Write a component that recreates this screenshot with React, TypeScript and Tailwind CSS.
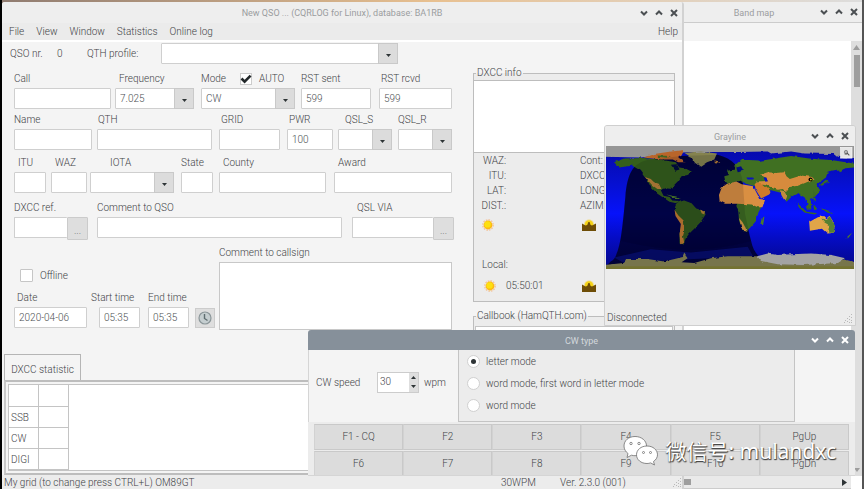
import React from "react";

type Kids = { children?: React.ReactNode };

const inputBase =
  "h-[21px] min-w-0 rounded-[1px] border border-[#cfcfcf] bg-white px-1 text-[#4c5053] outline-none";

function Controls({ light = false, snug = false }: { light?: boolean; snug?: boolean }) {
  const tone = light ? "text-white" : "text-[#4b4f52]";
  const edge = snug ? "pr-[3px]" : "pr-[5px]";
  return (
    <div className={`flex justify-end gap-[5px] ${edge} ${tone}`}>
      <button type="button" aria-label="Minimize" className="size-[10px]">
        <svg viewBox="0 0 10 10" fill="none" stroke="currentColor" strokeWidth="2">
          <path d="M2 3.5 5 6.5 8 3.5" />
        </svg>
      </button>
      <button type="button" aria-label="Maximize" className="size-[10px]">
        <svg viewBox="0 0 10 10" fill="none" stroke="currentColor" strokeWidth="2">
          <path d="M2 6.5 5 3.5 8 6.5" />
        </svg>
      </button>
      <button type="button" aria-label="Close" className="size-[10px]">
        <svg viewBox="0 0 10 10" fill="none" stroke="currentColor" strokeWidth="2">
          <path d="M2 2 8 8M8 2 2 8" />
        </svg>
      </button>
    </div>
  );
}

function TitleBar({
  title,
  active = false,
  snug = false,
  tall = false,
}: {
  title: string;
  active?: boolean;
  snug?: boolean;
  tall?: boolean;
}) {
  return (
    <header
      className={`grid shrink-0 grid-cols-[1fr_auto_1fr] items-center ${tall ? "h-[21px]" : "h-5"} ${
        active ? "bg-[#86909a] text-[#d3d8dc]" : "bg-[#eeeeee] text-[#9b9d9f]"
      }`}
    >
      <span />
      <h2 className="pt-px text-[9px] font-normal">{title}</h2>
      <Controls light={active} snug={snug} />
    </header>
  );
}

function Field({
  id,
  label,
  className,
  indent = "",
  extra,
  children,
}: Kids & { id: string; label: string; className: string; indent?: string; extra?: React.ReactNode }) {
  return (
    <div className={`flex shrink-0 flex-col gap-[3px] ${className}`}>
      <div className={`flex h-3 items-center whitespace-nowrap ${indent}`}>
        <label htmlFor={id}>{label}</label>
        {extra}
      </div>
      {children}
    </div>
  );
}

function Text({ id, value = "" }: { id: string; value?: string }) {
  return <input id={id} type="text" defaultValue={value} className={`${inputBase} w-full`} />;
}

function Combo({ id, value = "" }: { id: string; value?: string }) {
  return (
    <div className="relative w-full">
      <select id={id} defaultValue={value} className={`${inputBase} block w-full appearance-none pr-5`}>
        <option value={value}>{value}</option>
      </select>
      <span className="pointer-events-none absolute inset-y-0 right-0 flex w-5 items-center justify-center border border-[#c9c9c9] bg-[#dcdcdc] pt-[3px]">
        <svg className="h-[3px] w-[5px]" viewBox="0 0 5 3" fill="#2e3436">
          <path d="M0 0h5L2.5 3z" />
        </svg>
      </span>
    </div>
  );
}

function Lookup({ id, label }: { id: string; label: string }) {
  return (
    <div className="flex items-start">
      <input id={id} type="text" className={`${inputBase} flex-1 border-r-0`} />
      <button
        type="button"
        aria-label={label}
        className="h-[23px] w-[21px] rounded-[1px] border border-[#cbcbcb] bg-[#dedede] pt-1 text-[#7a7a7a]"
      >
        ...
      </button>
    </div>
  );
}

function Sun() {
  return (
    <svg className="size-3" viewBox="0 0 12 12">
      <circle cx="6" cy="6" r="5.2" fill="none" stroke="#f3c49c" strokeWidth="1.4" strokeDasharray="1.6 1.1" />
      <circle cx="6" cy="6" r="4.4" fill="#fdb813" />
      <circle cx="5.6" cy="5.4" r="3.2" fill="#fde010" />
    </svg>
  );
}

function Sunset() {
  return (
    <svg className="h-3 w-3.5" viewBox="0 0 14 12">
      <circle cx="7" cy="5.5" r="5.2" fill="#f0e0a0" />
      <circle cx="7" cy="5.5" r="4.2" fill="#f5d316" />
      <path d="M0 4.500 3.500 6.500 5.200 6 6.400 3H7.600L8.600 6 10 6.500 14 4.500V12H0z" fill="#6e4d06" />
    </svg>
  );
}

function Grip() {
  return (
    <svg className="size-[9px] shrink-0" viewBox="0 0 9 9" fill="#b9b9b9">
      <path d="M7 0h1v1H7zM5 2h1v1H5zM7 3h1v1H7zM3 4h1v1H3zM5 5h1v1H5zM7 6h1v1H7zM1 6h1v1H1zM3 7h1v1H3zM0 8h1v1H0zM5 8h1v1H5zM7 8h1v1H7z" />
    </svg>
  );
}

function WorldMap() {
  return (
    <svg viewBox="6 18 742 366" preserveAspectRatio="none" className="h-[123px] w-full" role="img" aria-label="World map">
      <defs>
        <linearGradient id="sea" x1="0" y1="0" x2="0" y2="1">
          <stop offset="0" stopColor="#0508a8" />
          <stop offset=".3" stopColor="#0610d0" />
          <stop offset=".55" stopColor="#0612fa" />
          <stop offset=".75" stopColor="#050cc4" />
          <stop offset="1" stopColor="#040786" />
        </linearGradient>
        <filter id="rough" x="-5%" y="-5%" width="110%" height="110%">
          <feTurbulence type="fractalNoise" baseFrequency=".06" numOctaves="2" seed="4" result="n" />
          <feDisplacementMap in="SourceGraphic" in2="n" scale="9" xChannelSelector="R" yChannelSelector="G" />
        </filter>
      </defs>
      <rect x="6" y="18" width="742" height="366" fill="url(#sea)" />
      {/* Night side of the terminator */}
      <path d="M20 362C50 350 56 250 64 170 70 100 86 70 130 60L230 48 340 44C385 56 410 80 416 130 420 200 428 260 440 300 448 340 470 362 520 374L6 376z" fill="#000018" fillOpacity=".76" />
      <path d="M30 350 140 325 260 335 430 318 446 346 240 356 60 366z" fill="#0a1488" fillOpacity=".5" />
      <g filter="url(#rough)">
        <path d="M0 0H770V56L700 50 690 42 600 40 560 34 500 40 490 34 400 36 340 36 250 36 180 44 110 52 0 50z" fill="#969696" />
        {/* North America */}
        <path d="M30 66 60 55 120 54 175 60 215 66 225 82 240 84 262 96 250 104 232 108 222 122 210 134 204 146 184 144 170 150 178 166 196 170 204 180 222 182 216 188 196 184 160 160 140 140 126 114 110 92 84 76 46 82z" fill="#355f1d" />
        <path d="M200 74 218 72 226 88 214 92z" fill="#04083c" />
        <path d="M118 52 150 42 190 36 240 30 232 46 222 52 244 66 222 66 206 58 170 58z" fill="#b9652a" />
        <path d="M160 46 200 48 190 53 162 51z" fill="#3f6420" />
        <path d="M122 110 140 116 150 126 164 130 172 146 160 146 146 136z" fill="#b98238" />
        <path d="M240 38 290 34 338 40 330 58 308 66 288 80 272 68 262 52z" fill="#85834f" />
        <path d="M330 64 348 66 342 70 332 69z" fill="#b67b35" />
        <path d="M186 162 216 168 230 174 212 173z" fill="#4d7a2a" />
        {/* South America */}
        <path d="M218 186 240 180 262 188 276 204 302 212 304 222 288 246 270 264 254 280 244 294 238 312 226 308 226 280 232 250 214 222 212 202z" fill="#32591c" />
        <path d="M211 208 222 224 238 240 242 262 236 284 240 306 228 310 226 280 230 250 214 226z" fill="#c07a30" />
        <path d="M288 208 302 212 300 222 292 218z" fill="#b08035" />
        {/* Eurasia */}
        <path d="M362 124 360 108 374 104 368 92 392 88 390 76 410 60 436 60 470 62 520 54 560 48 620 56 680 60 748 70 748 82 722 84 704 96 700 88 670 94 664 112 648 124 636 132 646 150 632 168 616 176 624 192 614 196 604 182 598 170 580 158 562 168 546 184 536 170 526 156 500 150 480 150 462 138 446 136 430 132 412 120 388 126 380 134z" fill="#3f6f22" />
        <path d="M396 82 410 78 418 92 400 96z" fill="#060c80" />
        <path d="M466 104 490 96 516 98 540 96 546 108 556 116 590 106 622 110 630 118 612 124 596 130 580 136 556 140 548 152 536 146 520 148 500 142 482 134 456 132 452 124 490 122 484 112z" fill="#d68b3e" />
        <path d="M526 150 540 152 546 166 540 180 532 166z" fill="#c08c40" />
        <path d="M478 112 486 112 490 124 482 124zM426 112 450 112 446 118 430 118z" fill="#0710c8" />
        {/* Arabia */}
        <path d="M450 128 470 128 498 152 494 162 470 174 454 148z" fill="#cf7a2c" />
        {/* Africa */}
        <path d="M400 186 454 188 480 184 462 216 456 240 440 258 428 270 414 268 404 240 402 214 396 196z" fill="#3e6b22" />
        <path d="M344 164 352 142 368 130 396 124 412 132 446 138 458 160 466 176 482 178 474 200 460 200 442 192 400 190 362 190 346 182z" fill="#d98f42" />
        <path d="M404 232 414 244 424 262 426 270 412 266z" fill="#d99a45" />
        <path d="M472 232 480 228 476 250 468 250z" fill="#4d7a2a" />
        {/* South-east Asia and Oceania */}
        <path d="M576 186 592 200 606 214 638 218 630 222 600 216 584 202z" fill="#3b6b22" />
        <path d="M604 198 620 190 620 206 608 208zM626 150 632 168 634 184 628 178zM626 196 638 200 630 212zM648 202 672 210 686 220 668 216zM664 118 672 126 652 136 646 134z" fill="#3b6b22" />
        <path d="M614 244 640 230 656 226 666 236 676 228 692 252 686 276 668 278 652 264 616 270z" fill="#e0a548" />
        <path d="M650 234 666 238 676 230 692 252 686 276 670 276 674 254 660 246z" fill="#578033" />
        <path d="M742 276 734 288 722 294 732 284z" fill="#4d7a2a" />
        {/* Antarctica */}
        <path d="M0 372 60 366 66 354 130 354 180 362 236 348 240 338 250 352 232 364 270 366 320 352 370 346 460 346 530 350 720 356 760 366V400H0z" fill="#77754b" />
        <path d="M458 346 490 338 520 342 560 340 620 338 680 342 722 352 700 366 600 372 520 370 470 360z" fill="#a3a3a3" />
      </g>
      <path d="M64 170C70 100 86 70 130 60L230 48 340 44C385 56 410 80 416 130L422 220 440 300C300 340 180 330 50 300z" fill="#000010" fillOpacity=".12" />
      <rect x="6" y="376" width="742" height="8" fill="#747330" />
      <circle cx="618" cy="118" r="6" fill="#000" />
      <circle cx="619" cy="118" r="2.5" fill="#ece81a" />
      <rect x="708" y="22" width="34" height="32" fill="#e6e6e6" stroke="#fafafa" strokeWidth="2" />
      <circle cx="724" cy="36" r="5" fill="#b5b5b5" stroke="#707070" strokeWidth="2" />
      <path d="M727 38 734 46M720 42H728" stroke="#555" strokeWidth="3" />
    </svg>
  );
}

function QsoForm() {
  return (
    <form className="w-[471px] shrink-0 pl-3 pt-px">
      <div className="-ml-1 flex h-[21px] items-center">
        <span className="w-[47px]">QSO nr.</span>
        <span className="w-[30px]">0</span>
        <label htmlFor="profile" className="w-[74px]">QTH profile:</label>
        <div className="w-[237px]">
          <Combo id="profile" />
        </div>
      </div>

      <div className="mt-[9px] flex">
        <Field id="call" label="Call" className="w-[97px]"><Text id="call" /></Field>
        <Field id="freq" label="Frequency" className="ml-1 w-[79px]" indent="pl-1"><Combo id="freq" value="7.025" /></Field>
        <Field
          id="mode"
          label="Mode"
          className="ml-[7px] w-[94px]"
          extra={
            <label className="ml-[14px] flex items-center gap-[7px]">
              <span className="relative flex size-3 shrink-0">
                <input type="checkbox" defaultChecked className="peer size-3 appearance-none border border-[#cccccc] bg-white" />
                <svg className="pointer-events-none absolute inset-0 hidden peer-checked:block" viewBox="0 0 12 12" fill="none" stroke="#22282a" strokeWidth="2.6">
                  <path d="M1.5 5.5 4.6 8.6 10.6 2.6" />
                </svg>
              </span>
              AUTO
            </label>
          }
        >
          <Combo id="mode" value="CW" />
        </Field>
        <Field id="sent" label="RST sent" className="ml-[6px] w-[70px]"><Text id="sent" value="599" /></Field>
        <Field id="rcvd" label="RST rcvd" className="ml-2 w-[73px]" indent="pl-[2px]"><Text id="rcvd" value="599" /></Field>
      </div>

      <div className="mt-[5px] flex">
        <Field id="name" label="Name" className="w-[78px]"><Text id="name" /></Field>
        <Field id="qth" label="QTH" className="ml-[5px] w-[115px]" indent="pl-px"><Text id="qth" /></Field>
        <Field id="grid" label="GRID" className="ml-[7px] w-[61px]" indent="pl-[2px]"><Text id="grid" /></Field>
        <Field id="pwr" label="PWR" className="ml-[7px] w-[46px]" indent="pl-[2px]"><Text id="pwr" value="100" /></Field>
        <Field id="qsls" label="QSL_S" className="ml-[5px] w-[54px]" indent="pl-[7px]"><Combo id="qsls" /></Field>
        <Field id="qslr" label="QSL_R" className="ml-[6px] w-[54px]"><Combo id="qslr" /></Field>
      </div>

      <div className="mt-[7px] flex">
        <Field id="itu" label="ITU" className="w-8" indent="pl-1"><Text id="itu" /></Field>
        <Field id="waz" label="WAZ" className="ml-[5px] w-9" indent="pl-1"><Text id="waz" /></Field>
        <Field id="iota" label="IOTA" className="ml-[3px] w-[84px]" indent="pl-5"><Combo id="iota" /></Field>
        <Field id="state" label="State" className="ml-[7px] w-8"><Text id="state" /></Field>
        <Field id="county" label="County" className="ml-[6px] w-[107px]" indent="pl-1"><Text id="county" /></Field>
        <Field id="award" label="Award" className="ml-2 w-[118px]" indent="pl-1"><Text id="award" /></Field>
      </div>

      <div className="mt-[9px] flex">
        <Field id="ref" label="DXCC ref." className="w-[74px]"><Lookup id="ref" label="Choose DXCC reference" /></Field>
        <Field id="comment" label="Comment to QSO" className="ml-[9px] w-[245px]"><Text id="comment" /></Field>
        <Field id="via" label="QSL VIA" className="ml-[10px] w-[102px]" indent="pl-[5px]"><Lookup id="via" label="Choose QSL manager" /></Field>
      </div>

      <div className="mt-[7px] flex">
        <div className="w-[205px] pt-[22px]">
          <label className="flex items-center gap-[7px] pl-[6px]">
            <input type="checkbox" className="size-[13px] appearance-none rounded-[1px] border border-[#c6c6c6] bg-white" />
            Offline
          </label>
          <div className="mt-[10px] flex items-end">
            <Field id="date" label="Date" className="w-[73px]" indent="pl-[3px]"><Text id="date" value="2020-04-06" /></Field>
            <Field id="start" label="Start time" className="ml-1 w-[49px]"><div className="flex pl-2"><Text id="start" value="05:35" /></div></Field>
            <Field id="end" label="End time" className="ml-2 w-[41px]"><Text id="end" value="05:35" /></Field>
            <button type="button" aria-label="Set current time" className="ml-[6px] flex size-5 items-center justify-center border border-[#cccccc] bg-[#dedede]">
              <svg className="size-[14px]" viewBox="0 0 14 14" fill="none">
                <circle cx="7" cy="7" r="6" fill="#c5ced0" stroke="#8b9699" strokeWidth="1.2" />
                <path d="M6.5 3V7.5L9.5 9.5" stroke="#5f6d70" strokeWidth="1.4" />
              </svg>
            </button>
          </div>
        </div>
        <div className="flex w-[233px] flex-col gap-[3px]">
          <label htmlFor="callnote">Comment to callsign</label>
          <textarea id="callnote" className="h-[68px] resize-none border border-[#c8c8c8] bg-white p-1 outline-none" />
        </div>
      </div>
    </form>
  );
}

function InfoPanel() {
  return (
    <div className="mr-[7px] min-w-0 flex-1 pt-[25px]">
      <fieldset className="min-w-0 border border-[#bdbdbd] bg-[#ececec]">
        <legend className="ml-[2px] px-px">DXCC info</legend>
        <textarea aria-label="DXCC details" className="mt-px block h-[73px] w-full resize-none border-y border-[#bdbdbd] bg-white outline-none" />
        <dl className="grid grid-cols-[30px_74px_1fr] pl-[2px] leading-[15px]">
          <dt className="text-right">WAZ:</dt><dd /><dt>Cont:</dt>
          <dt className="text-right">ITU:</dt><dd /><dt>DXCC:</dt>
          <dt className="text-right">LAT:</dt><dd /><dt>LONG:</dt>
          <dt className="text-right">DIST.:</dt><dd /><dt>AZIM:</dt>
        </dl>
        <div className="mt-[6px] flex pl-2">
          <div className="w-[100px]"><Sun /></div>
          <Sunset />
        </div>
        <p className="mt-7 pl-2">Local:</p>
        <div className="mb-[9px] mt-[9px] flex items-center pl-[10px]">
          <Sun />
          <time className="w-[86px] pl-[10px]">05:50:01</time>
          <Sunset />
        </div>
      </fieldset>
      <fieldset className="mt-2 min-w-0 border border-[#bdbdbd] bg-[#ececec] px-px">
        <legend className="ml-px px-px">Callbook (HamQTH.com)</legend>
        <textarea aria-label="Callbook entry" className="mt-1 block h-4 w-full resize-none border border-[#c4c4c4] bg-white outline-none" />
      </fieldset>
    </div>
  );
}

function MainWindow() {
  return (
    <section className="absolute bottom-0 left-[2px] right-[180px] top-[2px] flex flex-col overflow-hidden rounded-t-[3px] border-r-2 border-[#d2d2d2] bg-[#f4f4f4]">
      <TitleBar title="New QSO ... (CQRLOG for Linux), database: BA1RB" snug tall />
      <nav className="flex h-[19px] shrink-0 items-center gap-3 border-b-2 border-white bg-[#ebebeb] pl-[7px] pr-1">
        <button type="button">File</button>
        <button type="button">View</button>
        <button type="button">Window</button>
        <button type="button">Statistics</button>
        <button type="button">Online log</button>
        <button type="button" className="ml-auto">Help</button>
      </nav>
      <div className="flex h-[312px] shrink-0 overflow-hidden">
        <QsoForm />
        <InfoPanel />
      </div>
      <div className="flex min-h-0 flex-1 flex-col pl-[2px]">
        <button type="button" className="-mb-px h-[27px] w-[77px] self-start border border-b-0 border-[#b5b5b5] bg-[#f4f4f4] pt-1">
          DXCC statistic
        </button>
        <div className="flex min-h-0 flex-1 flex-col border-2 border-r-0 border-[#bdbdbd] border-l-[#c8c8c8] p-[2px]">
          <div className="min-h-0 flex-1 border border-[#c4c4c4] bg-white">
            <table className="w-[60px] table-fixed border-collapse">
              <tbody>
                {["", "SSB", "CW", "DIGI"].map((band) => (
                  <tr key={band} className="h-[21px]">
                    <th scope="row" className="border-b border-r border-[#c4c4c4] px-[2px] pt-[3px] text-left font-light">{band}</th>
                    <td className="border-b border-r border-[#c4c4c4]" />
                  </tr>
                ))}
              </tbody>
            </table>
          </div>
        </div>
      </div>
      <footer className="flex h-[14px] shrink-0 items-center bg-[#ececec] pl-[2px] pt-px">
        <span className="min-w-0 flex-1">My grid (to change press CTRL+L) OM89GT</span>
        <span className="w-[59px]">30WPM</span>
        <span className="w-[113px]">Ver. 2.3.0 (001)</span>
        <Grip />
      </footer>
    </section>
  );
}

function BandMapWindow() {
  return (
    <section className="absolute bottom-0 left-[646px] right-[2px] top-[2px] flex flex-col bg-white">
      <TitleBar title="Band map" snug />
      <div className="h-[19px] shrink-0 border-t border-[#cccccc] bg-[#f4f4f4]" />
      <div className="flex min-h-0 flex-1">
        <div className="flex-1" />
        <div className="flex w-[11px] flex-col items-center bg-[#dedede] py-1">
          <svg className="h-[5px] w-[7px]" viewBox="0 0 7 5" fill="#9d9d9d"><path d="M3.5 0 7 5H0z" /></svg>
          <div className="mt-[5px] h-8 w-[6px] bg-[#9e9e9e]" />
          <svg className="mt-auto h-[4px] w-[6px]" viewBox="0 0 6 4" fill="#9d9d9d"><path d="M0 0h6L3 4z" /></svg>
        </div>
      </div>
      <div className="mr-[11px] flex h-[13px] shrink-0 items-center justify-between border-b border-[#cccccc] bg-[#e9e9e9] pr-1">
        <div className="h-[6px] w-[45px] bg-[#9e9e9e]" />
        <svg className="h-[7px] w-[5px]" viewBox="0 0 5 7" fill="#2e3436"><path d="M0 0 5 3.5 0 7z" /></svg>
      </div>
    </section>
  );
}

function GraylineWindow() {
  return (
    <section className="absolute left-[604px] right-[8px] top-[125px] flex h-[201px] flex-col overflow-hidden rounded-t-[3px] border border-[#cfcfcf] bg-[#ececec]">
      <TitleBar title="Grayline" />
      <div className="px-px"><WorldMap /></div>
      <footer className="mt-auto flex items-center justify-between pb-px pl-[2px] pr-[2px]">
        <span>Disconnected</span>
        <Grip />
      </footer>
    </section>
  );
}

const keys = ["F1 - CQ", "F2", "F3", "F4", "F5", "PgUp", "F6", "F7", "F8", "F9", "F10", "PgDn"];
const modes = ["letter mode", "word mode, first word in letter mode", "word mode"];

function CwWindow() {
  return (
    <section className="absolute left-[308px] right-[9px] top-[330px] flex h-[146px] flex-col overflow-hidden rounded-t-[3px] border-b border-[#d5d5d5] bg-[#f4f4f4]">
      <TitleBar title="CW type" active />
      <div className="flex h-[72px] shrink-0">
        <div className="flex w-[150px] items-center border-l border-[#d5d5d5] pb-2 pl-[7px]">
          <label htmlFor="speed" className="w-[61px] pt-[2px]">CW speed</label>
          <div className="flex h-[21px] w-[42px] border border-[#cccccc]">
            <input id="speed" type="text" inputMode="numeric" defaultValue="30" className="min-w-0 flex-1 bg-white px-[2px] outline-none" />
            <div className="flex w-[9px] flex-col bg-[#dedede]">
              <button type="button" aria-label="Faster" className="flex flex-1 items-center justify-center">
                <svg className="h-[3px] w-[5px]" viewBox="0 0 5 3" fill="#2e3436"><path d="M2.5 0 5 3H0z" /></svg>
              </button>
              <button type="button" aria-label="Slower" className="flex flex-1 items-center justify-center">
                <svg className="h-[3px] w-[5px]" viewBox="0 0 5 3" fill="#2e3436"><path d="M0 0h5L2.5 3z" /></svg>
              </button>
            </div>
          </div>
          <span className="pl-[5px] pt-[2px]">wpm</span>
        </div>
        <fieldset className="mr-[60px] flex flex-1 flex-col gap-[9px] border border-t-0 border-[#c4c4c4] bg-[#ececec] pl-2 pt-[5px]">
          {modes.map((mode, i) => (
            <label key={mode} className="flex h-[13px] items-center gap-[6px]">
              <span className="relative flex size-[13px]">
                <input type="radio" name="mode" defaultChecked={i === 0} className="peer size-[13px] appearance-none rounded-full border border-[#d0d0d0] bg-white" />
                <span className="pointer-events-none absolute left-1 top-1 hidden size-[5px] rounded-full bg-[#2e3436] peer-checked:block" />
              </span>
              {mode}
            </label>
          ))}
        </fieldset>
      </div>
      <div className="grid grid-cols-6 gap-y-px bg-[#ececec] px-[6px] pt-[2px]">
        {keys.map((key) => (
          <button key={key} type="button" className="h-[26px] border border-[#c9c9c9] border-l-[#d2d2d2] bg-[#dcdcdc]">
            {key}
          </button>
        ))}
      </div>
    </section>
  );
}

function Watermark() {
  return (
    <div className="pointer-events-none absolute bottom-[23px] right-[28px] flex items-center gap-[7px]">
      <svg className="h-[31px] w-[35px]" viewBox="0 0 35 30" fill="#fff" stroke="#6e6e6e" strokeWidth=".8">
        <path d="M12 1C5.500 1 1 5.200 1 10.500c0 3 1.500 5.700 4 7.500l-1 4 4.500-2.300c1.200.3 2.300.5 3.500.5 6.500 0 11.500-4.300 11.500-9.700S18.500 1 12 1z" />
        <path d="M24 10.500c-6 0-10.500 3.900-10.500 8.800S18 28 24 28c1.300 0 2.500-.2 3.600-.6L31.500 29.500l-1-3.500c2.400-1.600 4-4 4-6.700 0-4.900-4.500-8.800-10.500-8.800z" />
        <circle cx="8" cy="8" r="1.200" />
        <circle cx="16" cy="8" r="1.200" />
        <circle cx="20.500" cy="17" r="1" />
        <circle cx="27.500" cy="17" r="1" />
      </svg>
      <p className="font-['Noto_Sans','Noto_Sans_CJK_SC',sans-serif] text-[21px] leading-6 font-normal text-white [text-shadow:1px_1px_1px_#444,0_1px_1px_#555]">
        微信号: mulandxc
      </p>
    </div>
  );
}

export default function App() {
  return (
    <main className="relative h-screen overflow-hidden whitespace-nowrap bg-gradient-to-r from-[#8f7b70] via-[#e8c090] to-[#dddddd] font-['Roboto',sans-serif] text-[10px] font-light leading-3 text-[#3f4346]">
      <div className="absolute inset-y-0 left-0 w-[2px] bg-black" />
      <div className="absolute inset-y-0 right-0 w-[2px] bg-[#555555]" />
      <BandMapWindow />
      <MainWindow />
      <GraylineWindow />
      <CwWindow />
      <Watermark />
    </main>
  );
}
